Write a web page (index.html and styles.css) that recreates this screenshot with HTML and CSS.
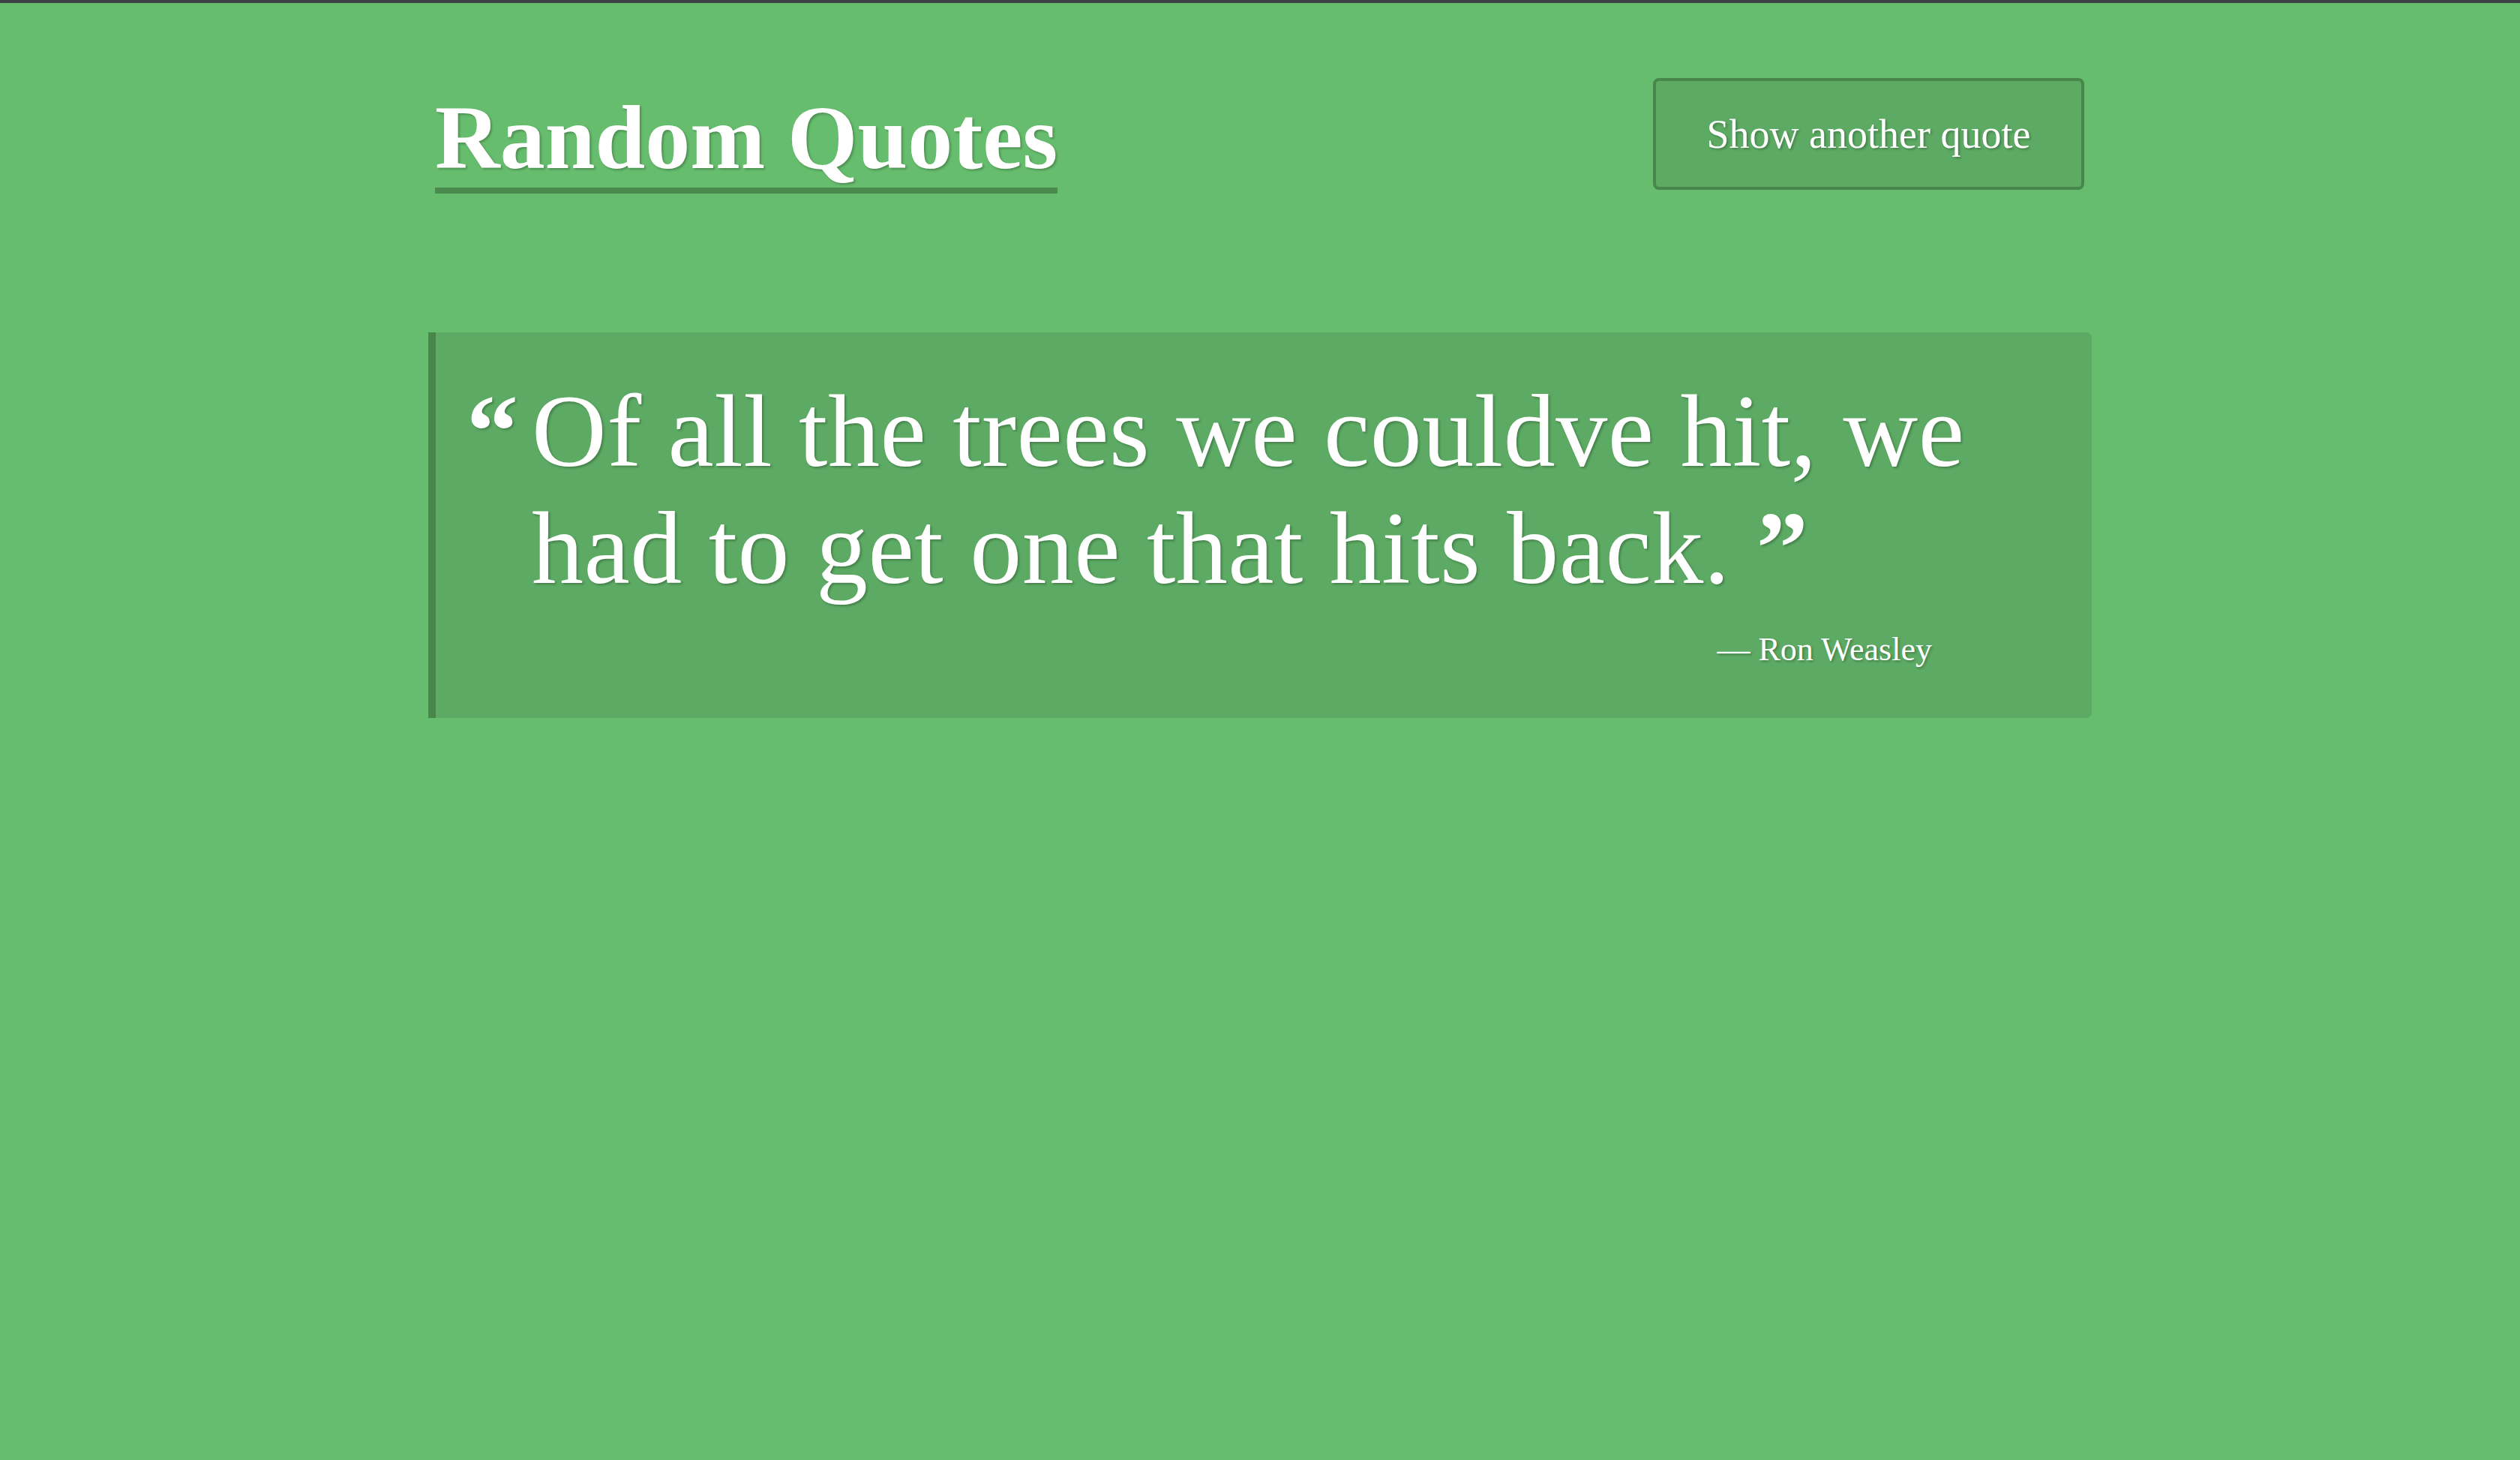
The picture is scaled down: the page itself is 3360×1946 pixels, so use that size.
FILE: index.html
```html
<!DOCTYPE html>
<html lang="en">
<head>
<meta charset="utf-8">
<title>Random Quotes</title>
<link rel="stylesheet" href="styles.css">
</head>
<body>
<div class="container">
  <header class="header">
    <h1 class="title">Random Quotes</h1>
    <button class="btn" type="button">Show another quote</button>
  </header>
  <section class="quote-box">
    <div class="quote-row">
      <span class="mark">“</span>
      <p class="quote-text">Of all the trees we couldve hit, we had to get one that hits back. <b class="mark-close">”</b></p>
    </div>
    <p class="author">— Ron Weasley</p>
  </section>
</div>
</body>
</html>
```

FILE: styles.css
```css
html, body {
  margin: 0;
  padding: 0;
}
body {
  background: #66bd6d;
  border-top: 4px solid #3d4045;
  min-height: 1942px;
  font-family: "Liberation Serif", "Times New Roman", serif;
  color: #ffffff;
}
.container {
  width: 2218px;
  margin: 0 auto;
}
.header {
  display: flex;
  justify-content: space-between;
  align-items: flex-start;
  padding: 100px 10px 0 9px;
}
.title {
  margin: 20px 0 0 0;
  font-size: 120px;
  font-weight: 700;
  line-height: 120px;
  padding-bottom: 6px;
  border-bottom: 8px solid #4a8a4f;
  text-shadow: 2px 2px 3px rgba(0, 0, 0, 0.25);
}
.btn {
  box-sizing: border-box;
  width: 575px;
  height: 149px;
  padding: 2px 0 0 0;
  background: #5caa63;
  border: 4px solid #47874c;
  border-radius: 8px;
  color: #ffffff;
  font-family: "Liberation Serif", "Times New Roman", serif;
  font-size: 54px;
  line-height: 1.2;
  text-shadow: 2px 2px 3px rgba(0, 0, 0, 0.25);
}
.quote-box {
  margin-top: 185px;
  background: #5caa63;
  border-left: 10px solid #47874c;
  border-radius: 0 8px 8px 0;
  padding: 54px 0 64px 41px;
}
.quote-row {
  display: flex;
  align-items: flex-start;
}
.mark, .mark-close {
  font-weight: 700;
}
.mark {
  font-size: 138px;
  line-height: 156px;
  margin-right: 18px;
  text-shadow: 2px 2px 3px rgba(0, 0, 0, 0.25);
}
.quote-text {
  margin: 0;
  width: 2010px;
  font-size: 138px;
  line-height: 156px;
  letter-spacing: 0.5px;
  text-shadow: 2px 2px 3px rgba(0, 0, 0, 0.25);
}
.author {
  margin: 31px 0 0 0;
  padding-right: 213px;
  text-align: right;
  font-size: 44px;
  line-height: 1.2;
  text-shadow: 2px 2px 3px rgba(0, 0, 0, 0.25);
}
```
